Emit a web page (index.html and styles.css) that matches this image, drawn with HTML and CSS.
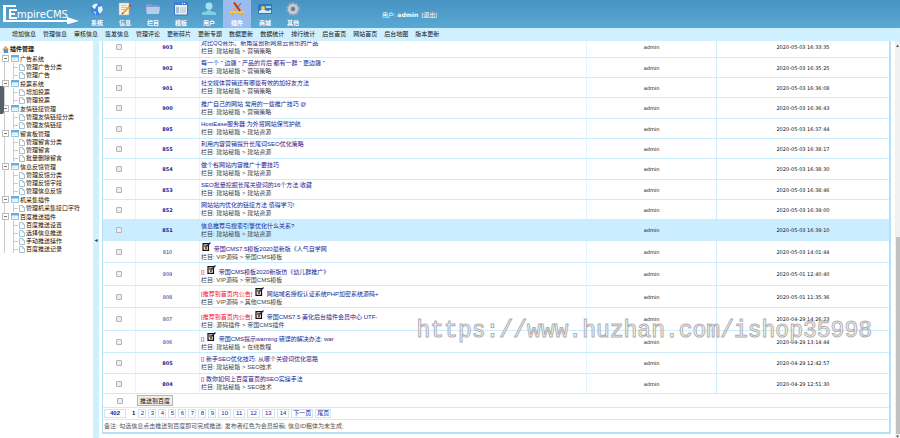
FILE: index.html
```html
<!DOCTYPE html>
<html lang="zh-CN">
<head>
<meta charset="utf-8">
<title>EmpireCMS</title>
<link rel="stylesheet" href="styles.css">
</head>
<body>
<svg class="defs" aria-hidden="true">
  <symbol id="folder" viewBox="0 0 8 7"><path fill="#fff" stroke="#8cc4e4" d="M.5.5h7v6h-7z"/><path fill="#62aedd" d="M0 0h8v2.500H0z"/><path stroke="#b8dcf0" stroke-width=".6" d="M1 4.200h6M3 2.500v4"/></symbol>
  <symbol id="page" viewBox="0 0 6 7"><path fill="#fff" stroke="#8fb2cc" stroke-width=".8" d="M.5.5h3l2 2v4h-5z"/><path fill="none" stroke="#8fb2cc" stroke-width=".6" d="M3.500.5v2h2"/></symbol>
  <symbol id="pic" viewBox="0 0 9 9"><path fill="#e8e6df" stroke="#111" stroke-width="1.200" d="M1 1.600h5.500v6.800H1z"/><path fill="#4d8a52" d="M2 3h3v2H2z"/><path fill="#b33a2a" d="M3 5h2v2H3z"/><path stroke="#1c1c70" stroke-width="1.200" d="M4.500 4.500 8.500.5"/></symbol>
</svg>

<header class="top">
  <a class="logo" href="#" aria-label="EmpireCMS"><svg class="logo-mark" viewBox="0 0 78 20" aria-hidden="true"><path fill="#fff" d="M0 1h13v2H3v13h61v-3l12 4-12 3.500V18H0z"/><path fill="none" stroke="#fff" stroke-width="2" d="M14 6H7v8h7M7 10h5"/><text x="14" y="14" class="logo-text">mpireCMS</text></svg></a>
  <nav class="modules">
    <a href="#"><svg viewBox="0 0 14 14"><circle cx="7" cy="7" r="6.300" fill="#3b86dc"/><path fill="#e4f2ff" d="M2 4c2-3 5-3 6-2L6 5 5 7 3 6zM8 5l4-1 1 4-3 4-2-3z"/><path fill="#b8dcfb" d="M3 9l3 1v3z"/></svg>系统</a>
    <a href="#"><svg viewBox="0 0 14 14"><path fill="#f6f4ed" stroke="#b5b09c" stroke-width=".6" d="M1 1h10v12H1z"/><path stroke="#a8b2bc" stroke-width=".7" d="M3 3.500h6M3 5.500h6M3 7.500h4"/><path stroke="#e9a826" stroke-width="2" d="M5 11l7-7"/><path stroke="#c33" stroke-width="2" d="M11.500 4.500l1.200-1.200"/><path fill="#333" d="M3.500 12.500l.7-2 1.300 1.300z"/></svg>信息</a>
    <a href="#"><svg viewBox="0 0 14 14"><path fill="#7f9dcc" d="M0 2h5l1 1h7v9H0z"/><path fill="#b7cced" d="M0 5h14l-1 7H1z"/></svg>栏目</a>
    <a href="#"><svg viewBox="0 0 14 14"><path fill="#e9eef4" stroke="#3f75c0" d="M.5.500h13v12.500H.500z"/><path fill="#3f7ed4" d="M0 0h14v3H0z"/><path fill="#a6bfdb" d="M2 5h3v6H2z"/><path fill="#d0d8df" d="M6 5h6v6H6z"/><path fill="#fff" d="M8 1h1v1H8zM10 1h1v1h-1z"/></svg>模板</a>
    <a href="#"><svg viewBox="0 0 14 14"><circle cx="7" cy="4" r="3.500" fill="#a2e3ee"/><path fill="#7dd1e4" d="M5.500 7h3v2L14 10.500V13H0v-2.500L5.500 9z"/></svg>用户</a>
    <a href="#" class="active"><svg viewBox="0 0 14 14"><path stroke="#e8a82c" stroke-width="2" d="M8 2L2 13M8 4l5 9"/><path stroke="#f4c649" stroke-width="2" d="M0 10h14"/><path stroke="#c72e24" stroke-width="2" d="M4 .500L10 9"/><path stroke="#4873b8" stroke-width="1" d="M11 1L8 5"/></svg>插件</a>
    <a href="#"><svg viewBox="0 0 14 14"><path fill="#2f78c4" d="M0 2h14v10H0z"/><path fill="#d7ebf7" d="M1 9l4-2 4 2 4-1v3H1z"/><circle cx="5" cy="6" r="2" fill="#f6cd4c"/><path fill="#9fd2ee" d="M8 4h5v2H8z"/></svg>商城</a>
    <a href="#"><svg viewBox="0 0 14 14"><circle cx="7" cy="7" r="5.700" fill="none" stroke="#a0a7ae" stroke-width="2" stroke-dasharray="2.400 1.200"/><circle cx="7" cy="7" r="3.700" fill="none" stroke="#c4cad0" stroke-width="3"/><circle cx="7" cy="7" r="1.800" fill="#6c7d8d"/></svg>其他</a>
  </nav>
  <p class="user">用户: <b>admin</b> &nbsp;[<a href="#">退出</a>]</p>
</header>

<nav class="menu">
  <a href="#">增加信息</a><a href="#">管理信息</a><a href="#">审核信息</a><a href="#">签发信息</a><a href="#">管理评论</a><a href="#">更新碎片</a><a href="#">更新专题</a><a href="#">数据更新</a><a href="#">数据统计</a><a href="#">排行统计</a><a href="#">后台首页</a><a href="#">网站首页</a><a href="#">后台地图</a><a href="#">版本更新</a>
</nav>

<div class="body">
  <aside class="side">
    <h2><svg viewBox="0 0 8 8"><path fill="#5a8fd0" d="M2 3h5v5H2z"/><path fill="none" stroke="#ef9e38" stroke-width="1.500" d="M1 5 4 1l3 3"/></svg>插件管理</h2>
    <ul class="tree">
      <li><a href="#"><svg><use href="#folder"/></svg>广告系统</a><ul><li><a href="#"><svg><use href="#page"/></svg>管理广告分类</a></li><li><a href="#"><svg><use href="#page"/></svg>管理广告</a></li></ul></li>
      <li><a href="#"><svg><use href="#folder"/></svg>投票系统</a><ul><li><a href="#"><svg><use href="#page"/></svg>增加投票</a></li><li><a href="#"><svg><use href="#page"/></svg>管理投票</a></li></ul></li>
      <li><a href="#"><svg><use href="#folder"/></svg>友情链接管理</a><ul><li><a href="#"><svg><use href="#page"/></svg>管理友情链接分类</a></li><li><a href="#"><svg><use href="#page"/></svg>管理友情链接</a></li></ul></li>
      <li><a href="#"><svg><use href="#folder"/></svg>留言板管理</a><ul><li><a href="#"><svg><use href="#page"/></svg>管理留言分类</a></li><li><a href="#"><svg><use href="#page"/></svg>管理留言</a></li><li><a href="#"><svg><use href="#page"/></svg>批量删除留言</a></li></ul></li>
      <li><a href="#"><svg><use href="#folder"/></svg>信息反馈管理</a><ul><li><a href="#"><svg><use href="#page"/></svg>管理反馈分类</a></li><li><a href="#"><svg><use href="#page"/></svg>管理反馈字段</a></li><li><a href="#"><svg><use href="#page"/></svg>管理信息反馈</a></li></ul></li>
      <li><a href="#"><svg><use href="#folder"/></svg>机采集插件</a><ul><li><a href="#"><svg><use href="#page"/></svg>管理机采集接口字符</a></li></ul></li>
      <li><a href="#"><svg><use href="#folder"/></svg>百度推送插件</a><ul><li><a href="#"><svg><use href="#page"/></svg>百度推送设置</a></li><li><a href="#"><svg><use href="#page"/></svg>选择信息推送</a></li><li><a href="#"><svg><use href="#page"/></svg>手动推送操作</a></li><li><a href="#"><svg><use href="#page"/></svg>百度推送记录</a></li></ul></li>
    </ul>
    <span class="edge-tab"></span>
  </aside>
  <button class="splitter" aria-label="收起">◂</button>

  <main class="content">
    <table class="list">
      <colgroup><col class="c-check"><col class="c-id"><col><col class="c-user"><col class="c-time"></colgroup>
      <tbody class="posts">
        <tr><td><input type="checkbox" aria-label="903"></td><td><b>903</b></td><td><a href="#">对比QQ音乐、新角度剖析网易云音乐的产品</a><small>栏目: 建站秘籍 &gt; 营销策略</small></td><td>admin</td><td>2020-05-03 16:33:35</td></tr>
        <tr><td><input type="checkbox" aria-label="902"></td><td><b>902</b></td><td><a href="#">每一个 " 边疆 " 产品的背后 都有一群 " 更边疆 "</a><small>栏目: 建站秘籍 &gt; 营销策略</small></td><td>admin</td><td>2020-05-03 16:35:25</td></tr>
        <tr><td><input type="checkbox" aria-label="901"></td><td><b>901</b></td><td><a href="#">社交媒体营销还有哪些有效的加好友方法</a><small>栏目: 建站秘籍 &gt; 营销策略</small></td><td>admin</td><td>2020-05-03 16:36:08</td></tr>
        <tr><td><input type="checkbox" aria-label="900"></td><td><b>900</b></td><td><a href="#">推广自己的网站 常用的一些推广技巧 @</a><small>栏目: 建站秘籍 &gt; 营销策略</small></td><td>admin</td><td>2020-05-03 16:36:43</td></tr>
        <tr><td><input type="checkbox" aria-label="895"></td><td><b>895</b></td><td><a href="#">HostEase服务器:为外贸网站保驾护航</a><small>栏目: 建站秘籍 &gt; 建站资源</small></td><td>admin</td><td>2020-05-03 16:37:44</td></tr>
        <tr><td><input type="checkbox" aria-label="855"></td><td><b>855</b></td><td><a href="#">利用内容营销提升长尾词SEO优化策略</a><small>栏目: 建站秘籍 &gt; 建站资源</small></td><td>admin</td><td>2020-05-03 16:38:17</td></tr>
        <tr><td><input type="checkbox" aria-label="854"></td><td><b>854</b></td><td><a href="#">做个谷网站内容推广十要技巧</a><small>栏目: 建站秘籍 &gt; 建站资源</small></td><td>admin</td><td>2020-05-03 16:38:30</td></tr>
        <tr><td><input type="checkbox" aria-label="853"></td><td><b>853</b></td><td><a href="#">SEO批量挖掘长尾关键词的16个方法 收藏</a><small>栏目: 建站秘籍 &gt; 建站资源</small></td><td>admin</td><td>2020-05-03 16:38:46</td></tr>
        <tr><td><input type="checkbox" aria-label="852"></td><td><b>852</b></td><td><a href="#">网站站内优化的链接方法 值得学习!</a><small>栏目: 建站秘籍 &gt; 建站资源</small></td><td>admin</td><td>2020-05-03 16:39:00</td></tr>
        <tr class="hover"><td><input type="checkbox" aria-label="851"></td><td><b>851</b></td><td><a href="#">信息推荐与搜索引擎优化什么关系?</a><small>栏目: 建站秘籍 &gt; 建站资源</small></td><td>admin</td><td>2020-05-03 16:39:10</td></tr>
      </tbody>
      <tbody class="posts pictured">
        <tr><td><input type="checkbox" aria-label="810"></td><td>810</td><td><svg class="pic"><use href="#pic"/></svg> <a href="#">帝国CMS7.5模板2020最新版《人气自学网</a><small>栏目: VIP源码 &gt; 帝国CMS模板</small></td><td>admin</td><td>2020-05-03 14:01:44</td></tr>
        <tr><td><input type="checkbox" aria-label="809"></td><td>809</td><td><i>[]</i> <svg class="pic"><use href="#pic"/></svg> <a href="#">帝国CMS模板2020新版仿《幼儿群推广》</a><small>栏目: VIP源码 &gt; 帝国CMS模板</small></td><td>admin</td><td>2020-05-01 12:40:40</td></tr>
        <tr><td><input type="checkbox" aria-label="808"></td><td>808</td><td><i>[推荐到首页内公告]</i> <svg class="pic"><use href="#pic"/></svg> <a href="#">网站域名授权认证系统PHP加密系统源码+</a><small>栏目: VIP源码 &gt; 其他CMS模板</small></td><td>admin</td><td>2020-05-01 11:35:36</td></tr>
        <tr><td><input type="checkbox" aria-label="807"></td><td>807</td><td><i>[推荐到首页内公告]</i> <svg class="pic"><use href="#pic"/></svg> <a href="#">帝国CMS7.5 美化后台插件会员中心 UTF-</a><small>栏目: 源码插件 &gt; 帝国CMS插件</small></td><td>admin</td><td>2020-04-29 14:26:23</td></tr>
        <tr><td><input type="checkbox" aria-label="806"></td><td>806</td><td><i>[]</i> <svg class="pic"><use href="#pic"/></svg> <a href="#">帝国CMS提示warning:错误的解决办法: war</a><small>栏目: 建站秘籍 &gt; 在线教程</small></td><td>admin</td><td>2020-04-29 13:14:44</td></tr>
      </tbody>
      <tbody class="posts">
        <tr><td><input type="checkbox" aria-label="805"></td><td><b>805</b></td><td><i>[]</i> <a href="#">新手SEO优化技巧: 从哪个关键词优化思路</a><small>栏目: 建站秘籍 &gt; SEO技术</small></td><td>admin</td><td>2020-04-29 12:42:57</td></tr>
        <tr><td><input type="checkbox" aria-label="804"></td><td><b>804</b></td><td><i>[]</i> <a href="#">教你如何上百度首页的SEO实操手法</a><small>栏目: 建站秘籍 &gt; SEO技术</small></td><td>admin</td><td>2020-04-29 12:51:30</td></tr>
      </tbody>
      <tfoot>
        <tr class="actions"><td><input type="checkbox" aria-label="全选"></td><td colspan="4"><button class="push">推送到百度</button></td></tr>
        <tr class="pager"><td colspan="5"><div class="pages"><b class="total">402</b><b class="current">1</b><a href="#">2</a><a href="#">3</a><a href="#">4</a><a href="#">5</a><a href="#">6</a><a href="#">7</a><a href="#">8</a><a href="#">9</a><a href="#">10</a><a href="#">11</a><a href="#">12</a><a href="#">13</a><a href="#">14</a><a href="#">下一页</a><a href="#">尾页</a></div></td></tr>
        <tr class="note"><td colspan="5">备注: 勾选信息点击推送到百度即可完成推送; 发布者红色为会员投稿; 信息ID粗体为未生成;</td></tr>
      </tfoot>
    </table>
  </main>
  <div class="scroll"><span>▴</span><div class="thumb"></div><span>▾</span></div>
</div>
<div class="watermark">https://www.huzhan.com/ishop35998</div>
</body>
</html>
```

FILE: styles.css
```css
* { box-sizing: border-box; }

body {
  margin: 0;
  height: 100vh;
  display: flex;
  flex-direction: column;
  overflow: hidden;
  background: #fff;
  color: #111;
  font: 6px/8px "Liberation Sans", "Noto Sans CJK SC", sans-serif;
}

a { color: inherit; text-decoration: none; }
ul { list-style: none; margin: 0; padding: 0; }
.defs { position: absolute; width: 0; height: 0; }

/* Header */
.top {
  flex: none;
  display: flex;
  height: 28px;
  background: linear-gradient(#4793c1, #5aa8d4);
  color: #fff;
}
.logo { width: 83px; padding: 4px 0 0 3px; }
.logo-mark { display: block; width: 78px; height: 20px; }
.logo-text { font: 10px "DejaVu Sans", sans-serif; fill: #fff; }
.modules { display: flex; width: 299px; }
.modules a {
  display: flex;
  flex-direction: column;
  align-items: center;
  gap: 3px;
  width: 28px;
  padding-top: 2px;
  font-weight: bold;
}
.modules svg { width: 14px; height: 14px; }
.modules .active { background: #9bbcee; }
.user { margin: 0; line-height: 29px; }
.user b { font-family: "DejaVu Sans", sans-serif; }

.menu {
  flex: none;
  display: flex;
  gap: 7px;
  height: 13px;
  padding-left: 12px;
  background: #cff0ff;
  line-height: 13px;
}

.body { flex: 1; display: flex; min-height: 0; }

/* Sidebar tree */
.side { position: relative; width: 93px; padding: 3px 0 0 2px; white-space: nowrap; overflow: hidden; }
.side h2 { display: flex; align-items: center; gap: 1px; height: 10px; margin: 0; font-size: 6px; }
.side h2 svg { width: 7px; height: 7px; }
.tree { background: linear-gradient(#ccc, #ccc) 2px 0 / 1px 100% no-repeat; }
.tree > li > a { display: flex; align-items: center; height: 9px; }
.tree > li > a::before {
  content: "";
  width: 5px;
  height: 5px;
  margin-right: 2px;
  border: 1px solid #bbb;
  background: linear-gradient(#777, #777) center / 3px 1px no-repeat #fff;
}
.tree > li > a svg { width: 8px; height: 7px; margin-right: 1px; }
.tree ul { margin-left: 11px; border-left: 1px solid #ccc; }
.tree ul a { display: flex; align-items: center; gap: 1px; height: 8px; }
.tree ul a::before { content: ""; width: 4px; border-top: 1px solid #ccc; }
.tree ul svg { width: 6px; height: 7px; }
.edge-tab {
  position: absolute;
  left: 0;
  top: 45px;
  width: 4px;
  height: 28px;
  border-radius: 0 2px 2px 0;
  background: #54616b;
}

.splitter {
  width: 6px;
  padding: 0;
  border: 0;
  background: #cff0ff;
  color: #245;
  font: 6px/8px "DejaVu Sans", sans-serif;
}

/* Article list */
.content { flex: 1; min-width: 0; overflow: hidden; padding: 0 4px 0 3px; }
.list {
  width: 100%;
  margin-top: -4px;
  table-layout: fixed;
  border-collapse: separate;
  border-spacing: 0;
  border: 1px solid #b5e0f7;
  border-width: 0 2px 2px 1px;
}
.c-check { width: 33px; }
.c-id { width: 64px; }
.c-user { width: 130px; }
.c-time { width: 172px; }
.list td {
  padding: 0;
  border-bottom: 1px solid #cdedfc;
  text-align: center;
  white-space: nowrap;
}
.posts td { height: 20px; border-right: 1px solid #e0f5ff; font-family: "DejaVu Sans", "Noto Sans CJK SC", sans-serif; font-size: 5px; }
.posts tr:nth-child(3n+1) td { height: 21px; }
.posts td:last-child { border-right: 0; }
.posts tr:not(.hover) td:nth-child(4) { border-right-color: #cdedfc; }
.posts td:nth-child(3) {
  padding-left: 1px;
  text-align: left;
  font-family: "Liberation Sans", "Noto Sans CJK SC", sans-serif;
  font-size: 6px;
  line-height: 7px;
}
.posts b, .posts td:nth-child(2), .posts a { color: #1b2590; }
.posts small { display: block; font-size: 6px; line-height: 8px; color: #444; }
.posts i { color: #f0132c; font-style: normal; }
.posts .hover td { background: #caedff; border-right-color: #caedff; }
.posts.pictured tr td { height: 22px; }
.posts.pictured tr:nth-child(even) td { height: 23px; }
.pic { width: 9px; height: 9px; margin: 0 1px; }

.list input {
  appearance: none;
  display: block;
  width: 6px;
  height: 6px;
  margin: 0 auto;
  border: 1px solid #b4b4b4;
  border-radius: 1px;
  background: #eee;
}
.list .actions td { height: 14px; text-align: left; }
.push {
  display: block;
  height: 11px;
  margin-left: 1px;
  padding: 0 2px;
  border: 1px solid #b5b5b5;
  background: #eee;
  color: #111;
  font: inherit;
  line-height: 8px;
}
.list .pager td { height: 12px; }
.pages { display: flex; align-items: center; gap: 2px; padding-left: 1px; color: #1b2590; line-height: 7px; text-align: center; }
.pages a, .total { border: 1px solid #cfe4f5; padding: 0 1px; }
.pages a { min-width: 8px; }
.pages a:nth-of-type(n+9) { padding: 0 2px; }
.pages a:nth-of-type(n+14) { padding: 0 1px; }
.pages .total { padding: 0 5px; }
.current { color: #111; margin: 0 1px 0 4px; }
.list .note td { height: 12px; padding-left: 1px; border-bottom: 0; text-align: left; color: #555; }

/* Scrollbar */
.scroll {
  width: 5px;
  display: flex;
  flex-direction: column;
  background: #f0f0f0;
  color: #444;
  font: 5px/8px "DejaVu Sans", sans-serif;
  text-align: center;
}
.thumb { flex: 0 1 197px; margin: auto 0 0 1px; background: #c1c1c1; }
.scroll span:last-child { line-height: 4px; }

.watermark {
  position: absolute;
  right: 28px;
  bottom: 93px;
  font: 23px/28px "Liberation Mono", monospace;
  color: rgba(255, 255, 255, .8);
  -webkit-text-stroke: 1px #b0b0b0;
  pointer-events: none;
}
```
